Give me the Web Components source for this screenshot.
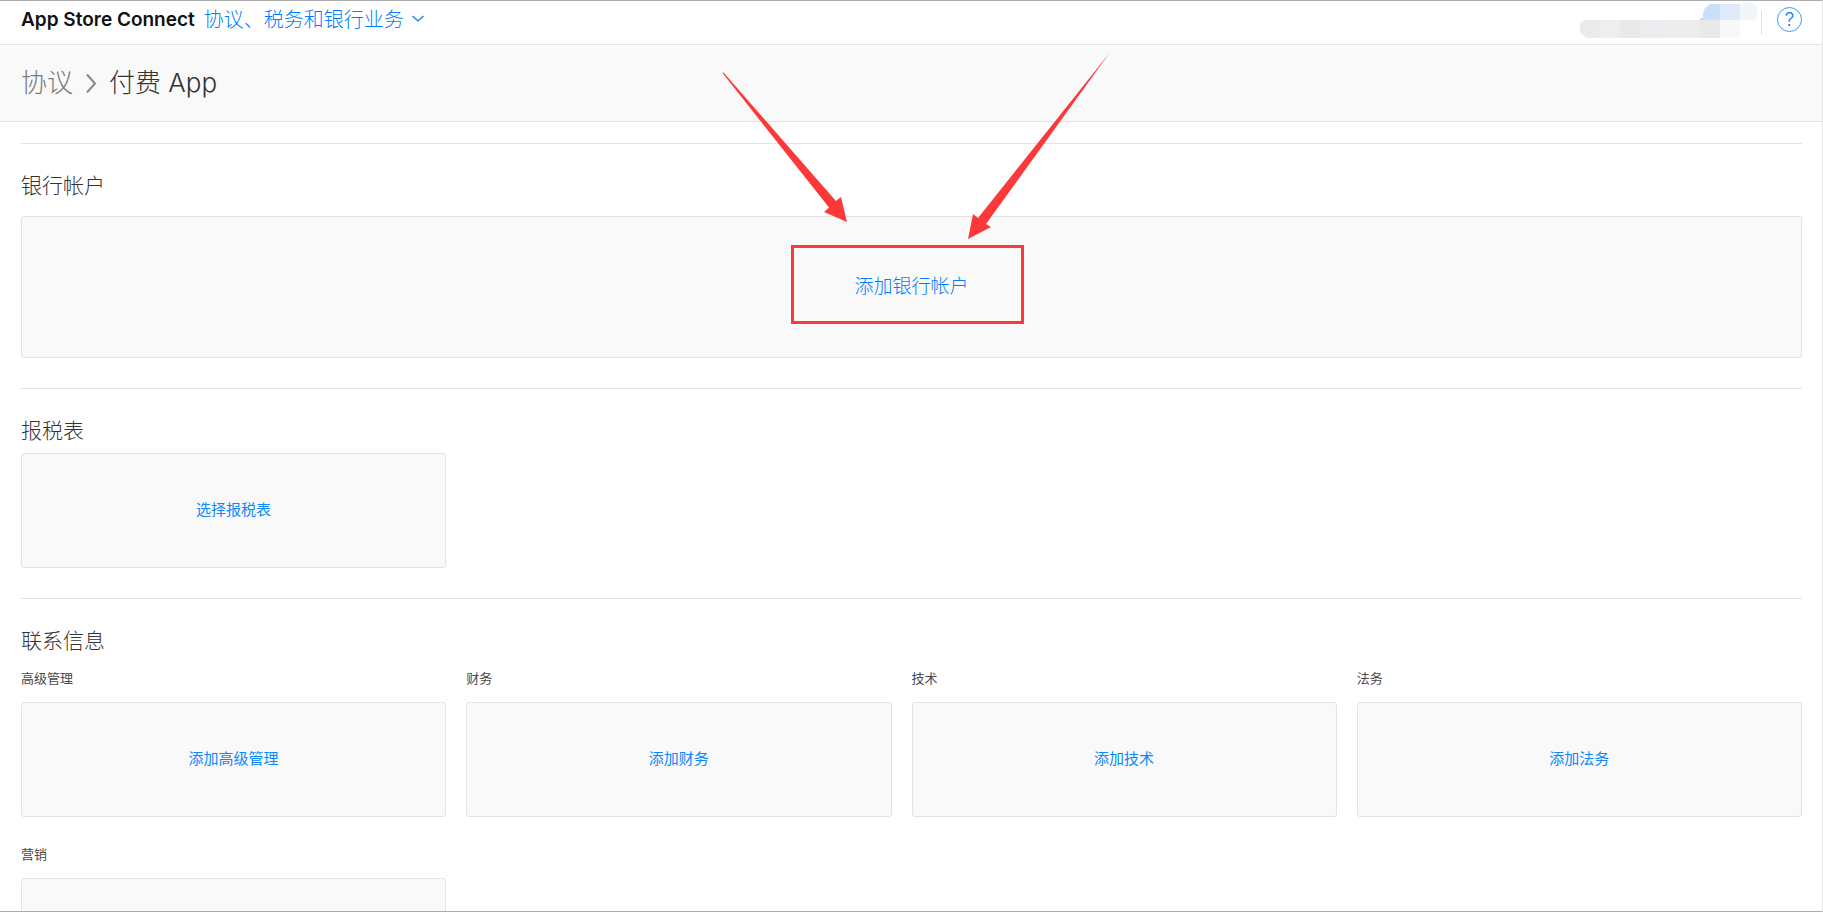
<!DOCTYPE html>
<html lang="zh-CN">
<head>
<meta charset="utf-8">
<title>App Store Connect</title>
<style>
  body {
    margin: 0;
    background: #fff;
    color: #333;
    font-family: Inter, "Noto Sans CJK SC", sans-serif;
    font-weight: 300;
  }
</style>
</head>
<body>
<app-window>
  <app-header brand="App Store Connect" section="协议、税务和银行业务"></app-header>
  <page-trail parent="协议">付费 App</page-trail>
  <main>
    <info-section heading="银行帐户">
      <add-card size="large" label="添加银行帐户"><callout-marks></callout-marks></add-card>
    </info-section>
    <info-section heading="报税表">
      <card-row><card-cell><add-card label="选择报税表"></add-card></card-cell></card-row>
    </info-section>
    <info-section heading="联系信息">
      <card-row>
        <card-cell caption="高级管理"><add-card label="添加高级管理"></add-card></card-cell>
        <card-cell caption="财务"><add-card label="添加财务"></add-card></card-cell>
        <card-cell caption="技术"><add-card label="添加技术"></add-card></card-cell>
        <card-cell caption="法务"><add-card label="添加法务"></add-card></card-cell>
        <card-cell caption="营销"><add-card></add-card></card-cell>
      </card-row>
    </info-section>
  </main>
</app-window>

<script>
const define = (name, render) => customElements.define(name, class extends HTMLElement {
  constructor() {
    super();
    this.attachShadow({ mode: "open" });
  }
  connectedCallback() {
    this.shadowRoot.innerHTML = render(this);
  }
});

define("app-window", () => `
  <style>
    :host {
      display: block; box-sizing: border-box; height: 100vh; overflow: hidden;
      border-top: 1px solid #acacac; border-bottom: 1px solid #acacac;
      border-right: 1px solid #e5e5e5;
    }
    ::slotted(main) { display: block; padding: 21px 20px 20px 21px; }
  </style>
  <slot></slot>`);

define("app-header", el => `
  <style>
    :host {
      display: flex; align-items: flex-start; box-sizing: border-box; height: 44px;
      padding: 0 20px 0 21px; border-bottom: 1px solid #e3e3e3; background: #fff;
    }
    .brand, button { padding: 7px 0; font-size: 19px; line-height: 24px; white-space: nowrap; }
    .brand { font-weight: 600; color: #111; }
    button {
      display: flex; align-items: center; gap: 8px; margin: 0 auto 0 9px; border: 0;
      background: none; color: #007dff; font-family: inherit; font-size: 20px; font-weight: 300;
    }
    .account { flex: none; }
    .divider { width: 1px; height: 24px; margin: 10px 15px 0 1px; background: #e0e0e0; }
    .help {
      display: flex; align-items: center; justify-content: center; box-sizing: border-box;
      width: 25px; height: 25px; margin-top: 6px; border: 1px solid #3d9cff; border-radius: 50%;
      color: #007dff; font-size: 19px; line-height: 24px; text-decoration: none;
    }
  </style>
  <span class="brand">${el.getAttribute("brand")}</span>
  <button type="button">${el.getAttribute("section")}
    <svg width="12" height="10" viewBox="0 0 12 10" fill="none" stroke="#007dff" stroke-width="1.2" aria-hidden="true"><path d="M.5 1 6 6 11.500 1"/></svg>
  </button>
  <svg class="account" width="180" height="40" viewBox="0 0 180 40" aria-hidden="true">
    <defs>
      <clipPath id="g"><path d="M6 19H160V36L157 37H7L2 34 0 30V22L2 20Z"/></clipPath>
      <clipPath id="b"><path d="M120 19V17H123V12L125 7 130 3H160L165 1H172L177 6 178 13 175 19Z"/></clipPath>
    </defs>
    <g clip-path="url(#g)">
      <path fill="#ebebe9" d="M0 18h20v20H0z"/><path fill="#eeeeee" d="M20 18h20v20H20z"/>
      <path fill="#ebe9e7" d="M40 18h20v20H40z"/><path fill="#ebecef" d="M60 18h20v20H60z"/>
      <path fill="#ededed" d="M80 18h40v20H80z"/><path fill="#e8eae9" d="M120 18h20v20h-20z"/>
      <path fill="#f8f8f8" d="M140 18h20v20h-20z"/>
    </g>
    <g clip-path="url(#b)">
      <path fill="#c9dffc" d="M120 0h20v19h-20z"/><path fill="#dfebfa" d="M140 0h20v19h-20z"/>
      <path fill="#f1f6fa" d="M160 0h20v19h-20z"/>
    </g>
  </svg>
  <span class="divider"></span>
  <a class="help" href="#help" aria-label="帮助">?</a>`);

define("page-trail", el => `
  <style>
    :host {
      display: flex; align-items: center; box-sizing: border-box; height: 77px;
      padding: 0 20px 0 21px; border-bottom: 1px solid #e3e3e3; background: #f9f9f9;
      font-size: 26px; line-height: 36px;
    }
    a { color: #7a7a7a; text-decoration: none; }
    svg { margin: 0 12px; }
    h1 { margin: 0; font: inherit; }
  </style>
  <a href="#agreements">${el.getAttribute("parent")}</a>
  <svg width="12" height="20" viewBox="0 0 12 20" fill="none" stroke="#888" stroke-width="2" aria-hidden="true"><path d="M2 1.500 10 10.500 2 19.500"/></svg>
  <h1><slot></slot></h1>`);

define("info-section", el => `
  <style>
    :host { display: block; padding-bottom: 30px; border-top: 1px solid #e3e3e3; }
    h2 { margin: 0; padding: 27px 0 7px; font-size: 21px; line-height: 30px; font-weight: 300; }
  </style>
  <h2>${el.getAttribute("heading")}</h2>
  <slot></slot>`);

define("card-row", () => `
  <style>
    :host { display: grid; grid-template-columns: repeat(4, 1fr); row-gap: 22px; }
    ::slotted(card-cell:not(:nth-child(4n))) { padding-right: 20px; }
  </style>
  <slot></slot>`);

define("card-cell", el => `
  <style>
    :host { display: block; color: #494949; }
    h3 { margin: 0; padding: 5px 0 14px; font-size: 13px; line-height: 20px; font-weight: 400; }
  </style>
  ${el.hasAttribute("caption") ? `<h3>${el.getAttribute("caption")}</h3>` : ""}
  <slot></slot>`);

define("add-card", el => `
  <style>
    :host {
      position: relative; display: flex; align-items: center; justify-content: center;
      box-sizing: border-box; height: 115px; padding-bottom: 2px; border: 1px solid #e3e3e3;
      border-radius: 3px; background: #f9f9f9; font-size: 15px; line-height: 24px; font-weight: 400;
    }
    :host([size="large"]) { height: 142px; margin-top: 8px; padding-bottom: 0; font-size: 19px; font-weight: 300; }
    button { padding: 0; border: 0; background: none; color: #0a88ff; font: inherit; }
    :host([size="large"]) button { color: #007dff; }
  </style>
  ${el.hasAttribute("label") ? `<button type="button">${el.getAttribute("label")}</button>` : ""}
  <slot></slot>`);

define("callout-marks", () => `
  <style>
    :host { position: absolute; top: -172px; left: 0; right: 0; width: 401px; margin: 0 auto; pointer-events: none; }
    svg { display: block; }
  </style>
  <svg width="401" height="290" viewBox="0 0 401 290" fill="#fc3838" aria-hidden="true">
    <path d="M11.500 28 12.500 27.500 125 156 130 152 136 177 113 167 118 162.500Z"/>
    <path d="M398.500 8 275 179 280 182 257 194 262 169 267 173Z"/>
    <rect x="81.500" y="201.500" width="230" height="76" fill="none" stroke="#fc3838" stroke-width="3"/>
  </svg>`);
</script>
</body>
</html>
